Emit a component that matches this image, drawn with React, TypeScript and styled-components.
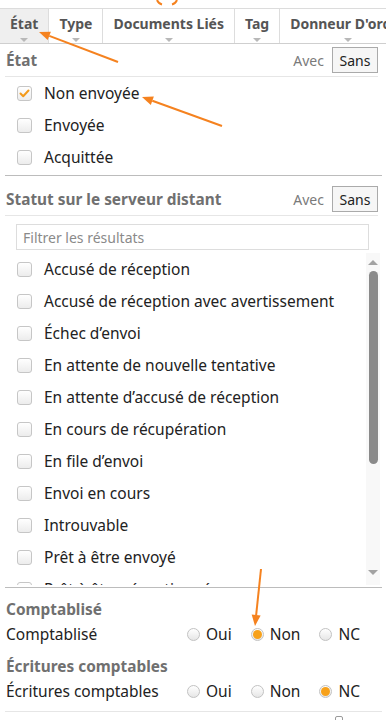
import React from "react";
import styled, { createGlobalStyle } from "styled-components";

const GlobalStyle = createGlobalStyle`
    body {
        margin: 0;
        background: #ffffff;
        font-family: "Noto Sans", "Open Sans", sans-serif;
        color: #222222;
    }
    * {
        box-sizing: border-box;
    }
`;

const Page = styled.div`
    position: relative;
    width: 386px;
    height: 720px;
    overflow: hidden;
    padding-top: 8px;
`;

const Header = styled.div`
    display: flex;
    height: 36px;
    border-top: 1px solid #dcdcdc;
    border-bottom: 1px solid #cfcfcf;
    overflow: hidden;
`;

const HeaderCell = styled.div<{ $active?: boolean }>`
    display: flex;
    flex-direction: column;
    align-items: center;
    flex-shrink: 0;
    padding: 5px 10px 0;
    border-right: 1px solid #dddddd;
    background: ${(p) => (p.$active ? "#efefef" : "#ffffff")};
    font-size: 14px;
    font-weight: 700;
    line-height: 20px;
    color: #555555;
    white-space: nowrap;
`;

const SortCaret = styled.span`
    margin-top: 4px;
    width: 0;
    height: 0;
    border-left: 4px solid transparent;
    border-right: 4px solid transparent;
    border-top: 4px solid #b8b8b8;
`;

const Panel = styled.div`
    padding: 0 4px 0 5px;
`;

const Section = styled.div<{ $top: number }>`
    padding-top: ${(p) => p.$top}px;
    border-bottom: 1px solid #bcbcbc;
`;

const SectionHead = styled.div`
    display: flex;
    align-items: center;
    justify-content: space-between;
    height: 30px;
    margin-right: 4px;
    padding: 0 0 3px 1px;
    border-bottom: 1px solid #e6e6e6;
`;

const HeadTitle = styled.span`
    font-size: 15.4px;
    font-weight: 700;
    color: #707070;
`;

const Toggle = styled.div`
    display: flex;
    align-items: center;
    gap: 8px;
`;

const ToggleText = styled.span`
    font-size: 14px;
    color: #7a7a7a;
`;

const ToggleButton = styled.span`
    display: flex;
    align-items: center;
    justify-content: center;
    width: 46px;
    height: 26px;
    border: 1px solid #aaaaaa;
    background: #f6f6f6;
    font-size: 14px;
    color: #222222;
`;

const CheckList = styled.div`
    margin-bottom: 2px;
`;

const ScrollArea = styled.div`
    display: flex;
    height: 332px;
    margin: 3px 2px 2px 0;
`;

const Viewport = styled.div`
    flex: 1;
    min-width: 0;
    overflow: hidden;
`;

const ScrollBar = styled.div`
    display: flex;
    flex-direction: column;
    align-items: center;
    width: 14px;
    flex-shrink: 0;
    padding: 7px 0 10px;
    background: #f8f8f8;
`;

const ScrollArrow = styled.span<{ $down?: boolean }>`
    width: 0;
    height: 0;
    border-left: 5px solid transparent;
    border-right: 5px solid transparent;
    ${(p) =>
        p.$down
            ? "border-top: 5px solid #a2a2a2; margin-top: auto;"
            : "border-bottom: 5px solid #a2a2a2;"}
`;

const ScrollThumb = styled.span`
    width: 9px;
    margin-top: 6px;
    border-radius: 5px;
    background: #8a8a8a;
`;

const CheckRow = styled.div`
    display: flex;
    align-items: center;
    gap: 12px;
    height: 32px;
    padding-left: 12px;
    font-size: 15.5px;
    color: #222222;
    white-space: nowrap;
`;

const Box = styled.span`
    display: flex;
    align-items: center;
    justify-content: center;
    flex-shrink: 0;
    width: 15px;
    height: 15px;
    border: 1px solid #c6c6c6;
    border-radius: 3px;
    background: linear-gradient(#ffffff, #ececec);
`;

const FilterInput = styled.div`
    height: 26px;
    margin: 8px 13px 0 11px;
    padding-left: 6px;
    border: 1px solid #dddddd;
    display: flex;
    align-items: center;
    font-size: 14px;
    color: #8a8a8a;
`;

const BottomSection = styled.div`
    padding: 12px 0 10px 1px;
    border-bottom: 1px solid #e6e6e6;
`;

const GroupTitle = styled.div<{ $gap: number }>`
    margin-top: ${(p) => p.$gap}px;
    font-size: 15.4px;
    font-weight: 700;
    line-height: 20px;
    color: #707070;
`;

const RadioRow = styled.div`
    display: flex;
    align-items: center;
    height: 20px;
    margin-top: 4px;
    font-size: 15.5px;
    color: #222222;
`;

const RadioLabel = styled.span`
    width: 181px;
    flex-shrink: 0;
`;

const RadioOption = styled.span`
    display: flex;
    align-items: center;
    gap: 6px;
    margin-right: 19px;
`;

const Dot = styled.span<{ $on?: boolean }>`
    display: flex;
    align-items: center;
    justify-content: center;
    width: 13px;
    height: 13px;
    border-radius: 50%;
    border: 1px solid #c2c2c2;
    background: linear-gradient(#ffffff, #e6e6e6);

    &::after {
        content: "";
        display: ${(p) => (p.$on ? "block" : "none")};
        width: 9px;
        height: 9px;
        border-radius: 50%;
        background: #f7a11a;
    }
`;

const FooterStub = styled.div`
    margin: 4px 0 0 330px;
    width: 8px;
    height: 6px;
    border: 1px solid #9a9a9a;
    border-radius: 2px;
`;

const Annotations = styled.svg`
    position: absolute;
    left: 0;
    top: 0;
    pointer-events: none;
`;

const etatItems = [
    { label: "Non envoyée", checked: true },
    { label: "Envoyée", checked: false },
    { label: "Acquittée", checked: false },
];

const statutItems = [
    "Accusé de réception",
    "Accusé de réception avec avertissement",
    "Échec d’envoi",
    "En attente de nouvelle tentative",
    "En attente d’accusé de réception",
    "En cours de récupération",
    "En file d’envoi",
    "Envoi en cours",
    "Introuvable",
    "Prêt à être envoyé",
    "Prêt à être réceptionné",
    "Reçu",
    "Refusé",
    "Rejeté",
    "Supprimé",
    "Traité",
];

function Check({ checked }: { checked?: boolean }) {
    return (
        <Box>
            {checked && (
                <svg width="11" height="9" viewBox="0 0 11 9">
                    <path
                        d="M1.5 4.5 L4.2 7.2 L9.5 1.5"
                        fill="none"
                        stroke="#f39a1b"
                        strokeWidth="2"
                        strokeLinecap="round"
                        strokeLinejoin="round"
                    />
                </svg>
            )}
        </Box>
    );
}

function RadioGroup({ label, value }: { label: string; value: string }) {
    return (
        <RadioRow>
            <RadioLabel>{label}</RadioLabel>
            {["Oui", "Non", "NC"].map((opt) => (
                <RadioOption key={opt}>
                    <Dot $on={opt === value} />
                    {opt}
                </RadioOption>
            ))}
        </RadioRow>
    );
}

function Arrow({ x1, y1, x2, y2 }: { x1: number; y1: number; x2: number; y2: number }) {
    const a = Math.atan2(y2 - y1, x2 - x1);
    const len = 11;
    const w = 4.5;
    const bx = x2 - len * Math.cos(a);
    const by = y2 - len * Math.sin(a);
    const px = -Math.sin(a) * w;
    const py = Math.cos(a) * w;
    return (
        <g>
            <line x1={x1} y1={y1} x2={bx} y2={by} stroke="#f5821f" strokeWidth="2" />
            <polygon
                points={`${x2},${y2} ${bx + px},${by + py} ${bx - px},${by - py}`}
                fill="#f5821f"
            />
        </g>
    );
}

export default function App() {
    const visible = 332;
    const content = statutItems.length * 32;
    const thumb = Math.round(((visible - 28) * visible) / content) - 4;

    return (
        <>
            <GlobalStyle />
            <Page>
                <Header>
                    <HeaderCell $active>
                        État
                        <SortCaret />
                    </HeaderCell>
                    <HeaderCell>
                        Type
                        <SortCaret />
                    </HeaderCell>
                    <HeaderCell>
                        Documents Liés
                        <SortCaret />
                    </HeaderCell>
                    <HeaderCell>
                        Tag
                        <SortCaret />
                    </HeaderCell>
                    <HeaderCell>
                        Donneur D'ordre
                        <SortCaret />
                    </HeaderCell>
                </Header>

                <Panel>
                    <Section $top={3}>
                        <SectionHead>
                            <HeadTitle>État</HeadTitle>
                            <Toggle>
                                <ToggleText>Avec</ToggleText>
                                <ToggleButton>Sans</ToggleButton>
                            </Toggle>
                        </SectionHead>
                        <CheckList>
                            {etatItems.map((it) => (
                                <CheckRow key={it.label}>
                                    <Check checked={it.checked} />
                                    {it.label}
                                </CheckRow>
                            ))}
                        </CheckList>
                    </Section>

                    <Section $top={10}>
                        <SectionHead>
                            <HeadTitle>Statut sur le serveur distant</HeadTitle>
                            <Toggle>
                                <ToggleText>Avec</ToggleText>
                                <ToggleButton>Sans</ToggleButton>
                            </Toggle>
                        </SectionHead>
                        <FilterInput>Filtrer les résultats</FilterInput>
                        <ScrollArea>
                            <Viewport>
                                {statutItems.map((label) => (
                                    <CheckRow key={label}>
                                        <Check />
                                        {label}
                                    </CheckRow>
                                ))}
                            </Viewport>
                            <ScrollBar>
                                <ScrollArrow />
                                <ScrollThumb style={{ height: thumb }} />
                                <ScrollArrow $down />
                            </ScrollBar>
                        </ScrollArea>
                    </Section>

                    <BottomSection>
                        <GroupTitle $gap={0}>Comptablisé</GroupTitle>
                        <RadioGroup label="Comptablisé" value="Non" />
                        <GroupTitle $gap={13}>Écritures comptables</GroupTitle>
                        <RadioGroup label="Écritures comptables" value="NC" />
                    </BottomSection>
                    <FooterStub />
                </Panel>

                <Annotations width="386" height="720" viewBox="0 0 386 720">
                    <path d="M157 0 Q158.5 3.5 162 4.5" fill="none" stroke="#f5821f" strokeWidth="2" />
                    <path d="M172 4.5 Q175.5 3.5 177 0" fill="none" stroke="#f5821f" strokeWidth="2" />
                    <Arrow x1={118} y1={62} x2={39} y2={32} />
                    <Arrow x1={222} y1={126} x2={142} y2={97} />
                    <Arrow x1={261} y1={569} x2={255} y2={626} />
                </Annotations>
            </Page>
        </>
    );
}
